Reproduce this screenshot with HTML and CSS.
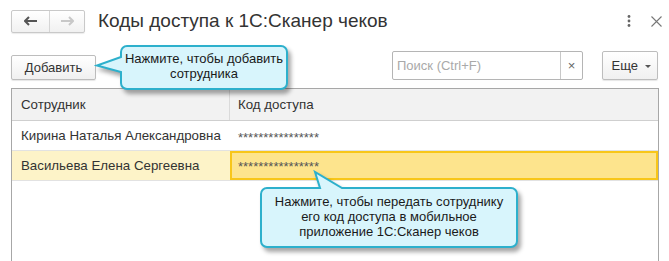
FILE: index.html
```html
<!DOCTYPE html>
<html>
<head>
    <title>Коды доступа к 1С:Сканер чеков</title>
    <meta charset="utf-8">
    <link rel="stylesheet" href="styles.css">
</head>
<body>
    <div class="form">
        <div class="title-bar">
            <div class="nav-group">
                <span class="nav-btn nav-back">
                    <svg width="14" height="10" viewBox="0 0 14 10"><path d="M1 5h12M5 1L1 5l4 4" fill="none" stroke="#555" stroke-width="2"/></svg>
                </span>
                <span class="nav-btn nav-forward">
                    <svg width="14" height="10" viewBox="0 0 14 10"><path d="M1 5h12M9 1l4 4-4 4" fill="none" stroke="#c8c8c8" stroke-width="2"/></svg>
                </span>
            </div>
            <h1 class="form-title">Коды доступа к 1С:Сканер чеков</h1>
            <div class="window-actions">
                <svg class="more-icon" width="4" height="12" viewBox="0 0 4 12"><circle cx="2" cy="1.5" r="1.4" fill="#666"/><circle cx="2" cy="6" r="1.4" fill="#666"/><circle cx="2" cy="10.5" r="1.4" fill="#666"/></svg>
                <svg class="close-icon" width="11" height="11" viewBox="0 0 11 11"><path d="M0.5 0.5l10 10M10.5 0.5l-10 10" stroke="#777" stroke-width="1.1"/></svg>
            </div>
        </div>

        <div class="toolbar">
            <button class="btn btn-add">Добавить</button>
            <div class="toolbar-spacer"></div>
            <div class="search-box">
                <span class="search-placeholder">Поиск (Ctrl+F)</span>
                <span class="search-clear">×</span>
            </div>
            <button class="btn btn-more">Еще <span class="caret"></span></button>
        </div>

        <div class="grid">
            <div class="grid-row grid-head">
                <div class="cell cell-name">Сотрудник</div>
                <div class="cell cell-code">Код доступа</div>
            </div>
            <div class="grid-row">
                <div class="cell cell-name">Кирина Наталья Александровна</div>
                <div class="cell cell-code stars">****************</div>
            </div>
            <div class="grid-row selected">
                <div class="cell cell-name">Васильева Елена Сергеевна</div>
                <div class="cell cell-code stars current">****************</div>
            </div>
        </div>

        <!-- Hint callouts -->
        <div class="hint hint-add">
            <svg class="hint-shape" width="200" height="56" viewBox="0 0 200 56">
                <path d="M33 4H187A6 6 0 0 1 193 10V41A6 6 0 0 1 187 47H33A6 6 0 0 1 27 41V30L3 23.5L27 15V10A6 6 0 0 1 33 4Z"/>
            </svg>
            <div class="hint-text">Нажмите, чтобы добавить<br>сотрудника</div>
        </div>

        <div class="hint hint-code">
            <svg class="hint-shape" width="270" height="86" viewBox="0 0 270 86">
                <path d="M12 20H65L60 4L87 20H256A6 6 0 0 1 262 26V73A6 6 0 0 1 256 79H12A6 6 0 0 1 6 73V26A6 6 0 0 1 12 20Z"/>
            </svg>
            <div class="hint-text">Нажмите, чтобы передать сотруднику<br>его код доступа в мобильное<br>приложение 1С:Сканер чеков</div>
        </div>
    </div>
</body>
</html>
```

FILE: styles.css
```css
body {
    margin: 0;
    background: #fff;
    font-family: 'Liberation Sans', Arial, sans-serif;
    color: #333;
}

.form {
    position: relative;
    width: 669px;
    height: 261px;
    overflow: hidden;
}

/* Title bar */
.title-bar {
    display: flex;
    align-items: center;
    height: 42px;
    padding: 0 6px 0 11px;
}

.nav-group {
    display: flex;
    height: 23px;
    border: 1px solid #c9c9c9;
    border-radius: 2px;
    box-sizing: border-box;
    background: linear-gradient(#fff, #f1f1f1);
    box-shadow: 0 1px 1px rgba(0,0,0,0.08);
}

.nav-btn {
    display: flex;
    align-items: center;
    justify-content: center;
    width: 37px;
}

.nav-back {
    border-right: 1px solid #d5d5d5;
}

.nav-forward {
    width: 34px;
}

.form-title {
    margin: 0 0 0 13px;
    font-size: 19px;
    font-weight: normal;
    color: #333;
    flex: 1;
    line-height: 22px;
}

.window-actions {
    display: flex;
    align-items: center;
    gap: 20px;
    padding-right: 1px;
}

/* Toolbar */
.toolbar {
    display: flex;
    align-items: center;
    height: 29px;
    margin-top: 9px;
    padding: 0 11px;
}

.btn {
    font-family: inherit;
    font-size: 13px;
    color: #333;
    background: linear-gradient(#fff, #f0f0f0);
    border: 1px solid #bdbdbd;
    border-radius: 2px;
    box-shadow: 0 1px 1px rgba(0,0,0,0.1);
    padding: 0;
    box-sizing: border-box;
}

.btn-add {
    width: 85px;
    height: 25px;
    margin-top: 3px;
}

.toolbar-spacer {
    flex: 1;
}

.search-box {
    display: flex;
    width: 191px;
    height: 29px;
    border: 1px solid #b5b5b5;
    border-radius: 2px;
    box-sizing: border-box;
}

.search-placeholder {
    flex: 1;
    padding-left: 4px;
    font-size: 13px;
    line-height: 27px;
    color: #a9a9a9;
}

.search-clear {
    border-left: 1px solid #c8c8c8;
    width: 21px;
    text-align: center;
    font-size: 13px;
    line-height: 27px;
    color: #666;
}

.btn-more {
    width: 56px;
    height: 29px;
    margin-left: 19px;
    padding-left: 2px;
}

.caret {
    display: inline-block;
    margin-left: 3px;
    vertical-align: middle;
    border-left: 3px solid transparent;
    border-right: 3px solid transparent;
    border-top: 3px solid #555;
}

/* Grid */
.grid {
    margin: 8px 10px 0 11px;
    height: 190px;
    border: 1px solid #a7a7a7;
    box-sizing: border-box;
}

.grid-row {
    display: flex;
    height: 29px;
    border-bottom: 1px solid #e2e2e2;
    font-size: 13.3px;
    white-space: nowrap;
}

.grid-head {
    height: 31px;
    background: #f2f2f2;
    border-bottom: 1px solid #cfcfcf;
}

.cell {
    display: flex;
    align-items: center;
    box-sizing: border-box;
}

.cell-name {
    width: 218px;
    padding-left: 9px;
}

.cell-code {
    flex: 1;
    padding-left: 8px;
}

.grid-head .cell-name {
    border-right: 1px solid #dadada;
}

.stars {
    font-size: 13px;
    color: #555;
    padding-top: 3px;
}

.selected {
    background: #fdf3c8;
}

.cell.current {
    background: #fde48d;
    border: 2px solid #f8c619;
    padding-left: 6px;
    padding-top: 1px;
}

/* Hints */
.hint {
    position: absolute;
}

.hint-shape {
    display: block;
    filter: drop-shadow(3px 4px 2px rgba(0,0,0,0.35));
}

.hint-shape path {
    fill: #d8f5fc;
    stroke: #2db0cc;
    stroke-width: 2;
}

.hint-text {
    position: absolute;
    text-align: center;
    font-size: 13px;
    line-height: 15px;
    color: #1a1a1a;
}

.hint-add {
    left: 94px;
    top: 42px;
}

.hint-add .hint-text {
    left: 27px;
    top: 9px;
    width: 166px;
}

.hint-code {
    left: 255px;
    top: 168px;
}

.hint-code .hint-text {
    left: 6px;
    top: 26px;
    width: 256px;
}
```
